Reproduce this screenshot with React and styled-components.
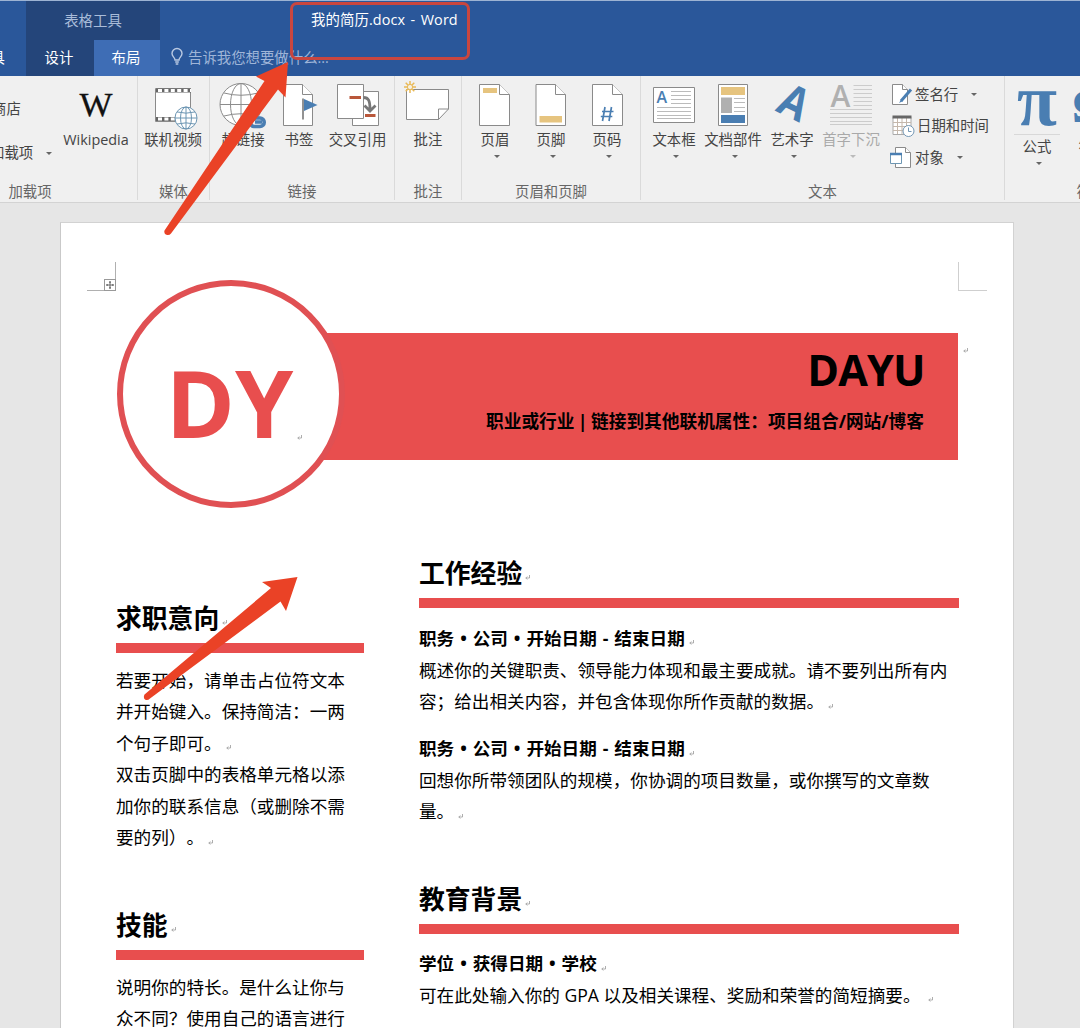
import React from 'react';
import styled, { createGlobalStyle, css } from 'styled-components';

const BLUE = '#2a579a';
const RED = '#e84e4e';
const ICON_BLUE = '#4a7eb2';
const LINE = '#8a8a8a';
const SANS = `'Open Sans', 'Noto Sans CJK SC', sans-serif`;

const GlobalStyle = createGlobalStyle`
  * { box-sizing: border-box; }
  body { margin: 0; background: #e6e6e6; font-family: ${SANS}; text-spacing-trim: space-all; }
  svg { display: block; overflow: visible; }
`;

const Window = styled.div`
  position: relative;
  width: 1080px;
  height: 1028px;
  overflow: hidden;
  background: #e6e6e6;
  display: flex;
  flex-direction: column;
`;

/* ---------- title bar ---------- */
const TitleBar = styled.header`
  flex: none;
  height: 76px;
  background: ${BLUE};
  border-top: 1px solid #9db3d3;
  display: flex;
  color: #fff;
  font-size: 14.4px;
  white-space: nowrap;
`;
const CutTab = styled.div`
  width: 26px;
  padding-top: 39px;
  line-height: 35px;
  display: flex;
  justify-content: flex-end;
  padding-right: 21px;
`;
const ContextTabs = styled.div`
  width: 134px;
  background: #24457a;
`;
const ContextTitle = styled.div`
  height: 39px;
  line-height: 39px;
  text-align: center;
  color: #a9bcd9;
`;
const TabRow = styled.div`
  display: flex;
  height: 36px;
`;
const Tab = styled.div`
  width: ${(p) => p.$w}px;
  line-height: 35px;
  padding-right: 2px;
  text-align: center;
  background: ${(p) => (p.$active ? '#3e6db5' : 'transparent')};
`;
const TitleArea = styled.div`
  flex: 1;
  display: flex;
  flex-direction: column;
`;
const DocTitle = styled.div`
  height: 39px;
  line-height: 38px;
  padding-left: 151px;
  letter-spacing: 0.1px;
  word-spacing: 1.6px;
`;
const TellMe = styled.div`
  height: 32px;
  padding-left: 11px;
  display: flex;
  align-items: center;
  gap: 5px;
  color: #9fb5d8;
`;

/* ---------- ribbon ---------- */
const Ribbon = styled.section`
  flex: none;
  height: 127px;
  background: #f0f0f0;
  border-bottom: 1px solid #d3d3d3;
  display: flex;
  color: #444;
  font-size: 14.4px;
  white-space: nowrap;
`;
const Group = styled.div`
  flex: none;
  width: ${(p) => p.$w}px;
  height: 124px;
  border-right: 1px solid #dadada;
  display: flex;
  flex-direction: column;
`;
const GroupBody = styled.div`
  flex: 1;
  display: flex;
  padding: 6px 0 0 ${(p) => p.$pad || 0}px;
  gap: ${(p) => p.$gap || 0}px;
`;
const GroupLabel = styled.div`
  height: 20px;
  line-height: 20px;
  margin-bottom: -2px;
  text-align: center;
  color: #666;
  padding-right: ${(p) => p.$shift || 0}px;
`;
const Item = styled.div`
  flex: none;
  width: ${(p) => p.$w}px;
  margin-left: ${(p) => p.$ml || 0}px;
  display: flex;
  flex-direction: column;
  align-items: center;
  color: ${(p) => (p.$disabled ? '#a9a9a9' : '#444')};
`;
const ItemLabel = styled.span`
  line-height: 20px;
  margin-top: 2px;
`;
const Caret = styled.i`
  width: 0;
  height: 0;
  border: 3px solid transparent;
  border-top-color: ${(p) => (p.$disabled ? '#bbb' : '#666')};
  border-bottom: 0;
  ${(p) => p.$below && css`margin: 5px 0 0 4px;`}
`;
const SplitLine = styled.hr`
  width: 46px;
  margin: 6px 0 0;
  border: 0;
  border-top: 1px solid ${(p) => (p.$hidden ? 'transparent' : '#d8d8d8')};
`;
const StoreColumn = styled.div`
  width: 60px;
  padding-top: 17px;
  display: flex;
  flex-direction: column;
  gap: 24px;
  line-height: 20px;
`;
const StoreRow = styled.div`
  display: flex;
  align-items: center;
  gap: 13px;
  margin-left: ${(p) => p.$cut}px;
`;
const CommandColumn = styled.div`
  display: flex;
  flex-direction: column;
  margin-left: 1px;
  padding-top: 1px;
`;
const Command = styled.div`
  height: 31.5px;
  padding-bottom: 8px;
  display: flex;
  align-items: center;
`;
const CommandText = styled.span`
  line-height: 20px;
  margin: 0 13px 0 ${(p) => p.$ml}px;
`;

/* Icons are drawn in window coordinates: x/y is the icon's corner. */
const Icon = ({ x, y = 82, w, h = 46, children }) => (
  <svg width={w} height={h} viewBox={`${x} ${y} ${w} ${h}`} fill="none" style={{ flex: 'none' }}>
    {children}
  </svg>
);

const PageShape = ({ x, y = 84.5, w = 30, h = 41, fold = 10 }) => (
  <g stroke={LINE} strokeWidth="1" fill="#fff">
    <path d={`M${x} ${y}h${w - fold}l${fold} ${fold}v${h - fold}h${-w}z`} />
    <path d={`M${x + w - fold} ${y}v${fold}h${fold}`} />
  </g>
);

const Globe = ({ cx, cy, r, color, sw = 1 }) => (
  <g stroke={color} strokeWidth={sw} fill="#fff">
    <circle cx={cx} cy={cy} r={r} />
    <ellipse cx={cx} cy={cy} rx={r * 0.5} ry={r} fill="none" />
    <path
      fill="none"
      d={`M${cx} ${cy - r}v${2 * r}M${cx - r} ${cy}h${2 * r}
      M${cx - r * 0.82} ${cy - r * 0.55}q${r * 0.82} ${r * 0.22} ${r * 1.64} 0
      M${cx - r * 0.82} ${cy + r * 0.55}q${r * 0.82} ${-r * 0.22} ${r * 1.64} 0`}
    />
  </g>
);

const rows = (x1, x2, ys) => ys.map((y) => `M${x1} ${y}H${x2}`).join('');

const BulbIcon = () => (
  <svg width="12" height="17" viewBox="0 0 12 17" fill="none" stroke="#b9c9e2" strokeWidth="1.4">
    <path d="M4 12C4 9.5 1 8.600 1 5.500a5 5 0 0 1 10 0C11 8.600 8 9.500 8 12zM4.200 14h3.600M4.700 16h2.600" />
  </svg>
);

const WikipediaIcon = () => (
  <Icon x={66} w={60}>
    <text x="79.500" y="115.500" fontFamily="Liberation Serif, serif" fontSize="34" fill="#111" stroke="#111" strokeWidth=".3" textLength="33" lengthAdjust="spacingAndGlyphs">W</text>
  </Icon>
);
const VideoIcon = () => (
  <Icon x={143} w={60}>
    <path d="M155.500 88.500h35v33h-35z" fill="#fff" stroke={LINE} />
    <path d="M156 90.500h35M156 119h35" stroke="#666" strokeWidth="4" />
    <path d="M158 90.500h33M158 119h33" stroke="#fff" strokeWidth="3" strokeDasharray="4 2.400" />
    <Globe cx={186} cy={118} r={11} color="#6d96b3" />
  </Icon>
);
const LinkIcon = () => (
  <Icon x={219} w={48}>
    <Globe cx={241} cy={104.5} r={21} color="#8c8c8c" />
    <path d="M252 118h8a4 4 0 0 1 0 8.500h-6a4 4 0 0 1-3.500-3M262 122h-7" stroke={ICON_BLUE} strokeWidth="3.600" />
  </Icon>
);
const BookmarkIcon = () => (
  <Icon x={283} w={32}>
    <PageShape x={283.5} w={29} />
    <path d="M303 98.500v21" stroke="#777" strokeWidth="1.600" />
    <path d="M304 99l13.500 6-13.500 6z" fill={ICON_BLUE} />
  </Icon>
);
const CrossRefIcon = () => (
  <Icon x={328} w={60}>
    <path d="M352.500 91.500h26v34h-26z" fill="#fff" stroke={LINE} />
    <path d="M337.500 84.500h26v34h-26z" fill="#fff" stroke={LINE} />
    <path d="M349.500 97.500h11.500M365 115.500h10.500" stroke="#b9573a" strokeWidth="3" />
    <path d="M363.500 97.500c5 0 6.500 3 6.500 12M364.500 105.500l5.500 5.500 5.500-5.500" stroke="#777" strokeWidth="2.800" />
  </Icon>
);
const CommentIcon = () => (
  <Icon x={403} w={50}>
    <path d="M406.500 89.500h42v19.500l-10 10.500h-32z" fill="#fff" stroke={LINE} />
    <path d="M448.500 109h-10v10.500" stroke={LINE} />
    <path d="M410 81v12M404 87h12M405.700 82.700l8.600 8.600M414.300 82.700l-8.600 8.600" stroke="#e9b956" strokeWidth="1.500" />
    <circle cx="410" cy="87" r="2.600" fill="#f6f1e4" stroke="#e9b956" />
  </Icon>
);
const HeaderIcon = () => (
  <Icon x={478} w={34}>
    <PageShape x={479.5} />
    <path d="M483 88h14v5h-14z" fill="#e6c47f" />
  </Icon>
);
const FooterIcon = () => (
  <Icon x={534} w={34}>
    <PageShape x={536} w={29.5} />
    <path d="M539.500 116h22.500v6.500h-22.500z" fill="#e6c47f" />
  </Icon>
);
const PageNumberIcon = () => (
  <Icon x={590} w={34}>
    <PageShape x={592.5} />
    <path d="M605 107l-2.500 14M611.500 107l-2.500 14M602 111.500h11.500M600.800 116.500h11.500" stroke={ICON_BLUE} strokeWidth="1.700" />
  </Icon>
);
const TextBoxIcon = () => (
  <Icon x={652} w={44}>
    <path d="M653.500 87.500h41v35h-41z" fill="#fff" stroke={LINE} />
    <path d={rows(671, 691, [91.5, 95.5, 99.5, 103.5]) + rows(657, 691, [107.5, 111.5, 115.5, 118.5])} stroke="#bbb" />
    <text x="656.500" y="103" fontSize="16" fontWeight="600" fill={ICON_BLUE}>A</text>
  </Icon>
);
const PartsIcon = () => (
  <Icon x={704} w={58}>
    <path d="M718.500 84.500h29v41h-29z" fill="#fff" stroke={LINE} />
    <path d="M721 87h24v8h-24z" fill="#e6c47f" />
    <path d="M721 97.500h11v15.500h-11z" fill="#b0b0b0" />
    <path d={rows(734, 745, [98.5, 102.5, 107.5, 111.5])} stroke="#bbb" />
    <path d="M721 115h24v8h-24z" fill={ICON_BLUE} />
  </Icon>
);
const WordArtIcon = () => (
  <Icon x={770} w={44}>
    <text transform="matrix(.86 .42 -.5 .96 774.5 110.500)" fontSize="42" fontWeight="700" fill={ICON_BLUE}>A</text>
  </Icon>
);
const DropCapIcon = () => (
  <Icon x={822} w={58}>
    <text x="830.500" y="107" fontSize="30" fontWeight="600" fill="#b0b0b0">A</text>
    <path d={rows(853.5, 872, [85.5, 89.5, 93.5, 97.5, 101.5, 105.5]) + rows(830, 872, [109.5, 113.5, 117.5, 121.5, 124.5])} stroke="#ccc" />
  </Icon>
);
const SignIcon = () => (
  <Icon x={889} y={84} w={26} h={22}>
    <PageShape x={892.5} y={84.5} w={15} h={20} fold={5} />
    <path d="M911 89.500L901 101" stroke={ICON_BLUE} strokeWidth="3" />
    <path d="M901.500 99l-2.500 4 4-2z" fill={ICON_BLUE} />
  </Icon>
);
const DateIcon = () => (
  <Icon x={889} y={116} w={26} h={22}>
    <path d="M893 118.500h18v17h-18z" fill="#fff" stroke="#aaa" />
    <path d="M897.500 119v16M902 119v16M906.500 119v16M893 123.500h18M893 127.500h18M893 131.500h18" stroke="#c5b8ac" />
    <path d="M892.500 118h19" stroke="#666" strokeWidth="3" />
    <circle cx="908.500" cy="132" r="5.500" fill="#fff" stroke="#7397b5" />
    <path d="M908.500 128.500v4h3" stroke="#7397b5" />
  </Icon>
);
const ObjectIcon = () => (
  <Icon x={889} y={147} w={26} h={22}>
    <PageShape x={895.5} y={147.5} w={15} h={20} fold={5} />
    <path d="M890.500 153.500h11v10h-11z" fill="#fff" stroke="#6d96b3" />
    <path d="M890 154h12" stroke={ICON_BLUE} strokeWidth="2.500" />
  </Icon>
);
const PiIcon = () => (
  <Icon x={1013} w={48}>
    <text x="1017" y="124.500" fontFamily="Liberation Serif, serif" fontSize="74" fontWeight="700" fill={ICON_BLUE} textLength="40" lengthAdjust="spacingAndGlyphs">π</text>
  </Icon>
);
const OmegaIcon = () => (
  <Icon x={1073} w={40}>
    <text x="1072" y="122" fontFamily="Liberation Serif, serif" fontSize="48" fontWeight="700" fill={ICON_BLUE}>Ω</text>
  </Icon>
);

const Tool = ({ w, ml, icon, label, menu, disabled }) => (
  <Item $w={w} $ml={ml} $disabled={disabled}>
    {icon}
    <ItemLabel>{label}</ItemLabel>
    {menu && <Caret $below $disabled={disabled} />}
  </Item>
);

/* ---------- document ---------- */
const Sheet = styled.main`
  flex: none;
  width: 954px;
  height: 830px;
  margin: 19px 0 0 60px;
  padding-top: 39px;
  background: #fff;
  border: 1px solid #d2d2d2;
  border-left-color: #c9c9c9;
  color: #000;
  white-space: nowrap;
`;
const CropMarks = styled.div`
  display: flex;
  justify-content: space-between;
  height: 29px;
  padding: 0 26px;
`;
const CropCorner = styled.div`
  width: 29px;
  border: 0 solid ${(p) => (p.$left ? '#b0b0b0' : '#cfcfcf')};
  border-bottom-width: 1px;
  ${(p) => (p.$left ? 'border-right-width: 1px;' : 'border-left-width: 1px;')}
  display: flex;
  align-items: flex-end;
  justify-content: flex-end;
`;
const MoveHandle = styled.div`
  width: 12px;
  height: 12px;
  margin: 0 -1px -1px 0;
  background: #fff;
  border: 1px solid #999;
`;
const Masthead = styled.div`
  display: flex;
  align-items: flex-start;
  height: 228px;
  margin-top: -11px;
  padding-left: 56px;
`;
const Monogram = styled.div`
  z-index: 1;
  flex: none;
  width: 228px;
  height: 228px;
  border: 6.500px solid #e05053;
  border-radius: 50%;
  background: #fff;
  display: flex;
  align-items: center;
  justify-content: center;
  padding: 16px 0 0 6px;
`;
const Initials = styled.span`
  color: ${RED};
  font-size: 93.5px;
  font-weight: 700;
  line-height: 100px;
`;
const Banner = styled.div`
  width: 728px;
  height: 126.500px;
  margin: 53px 0 0 -115px;
  padding: 9px 34px 0 0;
  background: ${RED};
  text-align: right;
  font-weight: 700;
`;
const Name = styled.div`
  font-size: 43px;
  letter-spacing: -0.8px;
  line-height: 56px;
  margin-right: -0.8px;
`;
const Role = styled.div`
  font-size: 17.7px;
  word-spacing: -1.2px;
  line-height: 24px;
  margin-top: 11px;
`;
const Columns = styled.div`
  display: flex;
  gap: 55px;
  padding-left: 55px;
`;
const Column = styled.div`
  width: ${(p) => p.$w}px;
  padding-top: ${(p) => p.$top}px;
`;
const Section = styled.section`
  margin-bottom: 51px;
`;
const Heading = styled.h2`
  margin: 0 0 5px;
  height: 40px;
  line-height: 40px;
  font-size: 25.8px;
  font-weight: 700;
  display: flex;
`;
const Rule = styled.div`
  height: 9.500px;
  background: ${RED};
  margin-bottom: ${(p) => p.$after}px;
`;
const Line = styled.div`
  height: 31.600px;
  line-height: 31.600px;
  font-size: 17.63px;
  font-weight: ${(p) => (p.$bold ? 700 : 400)};
  word-spacing: ${(p) => (p.$bold ? 1.35 : 0)}px;
  margin-top: ${(p) => p.$before || 0}px;
  display: flex;
`;
const MarkBox = styled.span`
  margin-left: ${(p) => p.$ml}px;
  align-self: ${(p) => p.$align || 'center'};
  padding-top: ${(p) => p.$drop}px;
`;
const ParagraphMark = ({ ml = 4, drop = 8, align }) => (
  <MarkBox $ml={ml} $drop={drop} $align={align}>
    <svg width="5" height="5" viewBox="0 0 5 5" fill="none" stroke="#999" strokeWidth=".8">
      <path d="M4.500 0v3H.8M2.300 1.500L.8 3l1.500 1.500" />
    </svg>
  </MarkBox>
);

/* ---------- annotations over the window ---------- */
const Highlight = styled.div`
  position: absolute;
  left: 290px;
  top: 2px;
  width: 180px;
  height: 58px;
  border: 3.500px solid #c9463f;
  border-radius: 7px;
`;
const Arrows = styled.svg`
  position: absolute;
  left: 0;
  top: 0;
`;

export default function App() {
  return (
    <Window>
      <GlobalStyle />
      <TitleBar>
        <CutTab>工具</CutTab>
        <ContextTabs>
          <ContextTitle>表格工具</ContextTitle>
          <TabRow>
            <Tab $w={68}>设计</Tab>
            <Tab $w={66} $active>布局</Tab>
          </TabRow>
        </ContextTabs>
        <TitleArea>
          <DocTitle>我的简历.docx - Word</DocTitle>
          <TellMe>
            <BulbIcon />
            <span>告诉我您想要做什么...</span>
          </TellMe>
        </TitleArea>
      </TitleBar>

      <Ribbon>
        <Group $w={138}>
          <GroupBody>
            <StoreColumn>
              <StoreRow $cut={-8}>商店</StoreRow>
              <StoreRow $cut={-10}>加载项<Caret /></StoreRow>
            </StoreColumn>
            <Tool w={72} icon={<WikipediaIcon />} label="Wikipedia" />
          </GroupBody>
          <GroupLabel $shift={77}>加载项</GroupLabel>
        </Group>
        <Group $w={72}>
          <GroupBody $pad={5}>
            <Tool w={60} icon={<VideoIcon />} label="联机视频" />
          </GroupBody>
          <GroupLabel>媒体</GroupLabel>
        </Group>
        <Group $w={185}>
          <GroupBody $pad={9} $gap={12.5}>
            <Tool w={48} icon={<LinkIcon />} label="超链接" />
            <Tool w={32} ml={3.5} icon={<BookmarkIcon />} label="书签" />
            <Tool w={60} icon={<CrossRefIcon />} label="交叉引用" />
          </GroupBody>
          <GroupLabel>链接</GroupLabel>
        </Group>
        <Group $w={67}>
          <GroupBody $pad={8}>
            <Tool w={50} icon={<CommentIcon />} label="批注" />
          </GroupBody>
          <GroupLabel>批注</GroupLabel>
        </Group>
        <Group $w={179}>
          <GroupBody $pad={16} $gap={22}>
            <Tool w={34} icon={<HeaderIcon />} label="页眉" menu />
            <Tool w={34} icon={<FooterIcon />} label="页脚" menu />
            <Tool w={34} icon={<PageNumberIcon />} label="页码" menu />
          </GroupBody>
          <GroupLabel>页眉和页脚</GroupLabel>
        </Group>
        <Group $w={364}>
          <GroupBody $pad={11} $gap={8}>
            <Tool w={44} icon={<TextBoxIcon />} label="文本框" menu />
            <Tool w={58} icon={<PartsIcon />} label="文档部件" menu />
            <Tool w={44} icon={<WordArtIcon />} label="艺术字" menu />
            <Tool w={58} icon={<DropCapIcon />} label="首字下沉" menu disabled />
            <CommandColumn>
              <Command>
                <SignIcon />
                <CommandText $ml={0}>签名行</CommandText>
                <Caret />
              </Command>
              <Command>
                <DateIcon />
                <CommandText $ml={2}>日期和时间</CommandText>
              </Command>
              <Command>
                <ObjectIcon />
                <CommandText $ml={0}>对象</CommandText>
                <Caret />
              </Command>
            </CommandColumn>
          </GroupBody>
          <GroupLabel>文本</GroupLabel>
        </Group>
        <Group $w={173}>
          <GroupBody $pad={8} $gap={12}>
            <Item $w={48}>
              <PiIcon />
              <SplitLine />
              <ItemLabel>公式</ItemLabel>
              <Caret $below />
            </Item>
            <Item $w={40}>
              <OmegaIcon />
              <SplitLine $hidden />
              <ItemLabel>符号</ItemLabel>
            </Item>
          </GroupBody>
          <GroupLabel>符号</GroupLabel>
        </Group>
      </Ribbon>

      <Sheet>
        <CropMarks>
          <CropCorner $left>
            <MoveHandle>
              <svg width="10" height="10" viewBox="0 0 10 10" stroke="#666" fill="none">
                <path d="M5 1v8M1 5h8M4 2.200h2M4 7.800h2M2.200 4v2M7.800 4v2" />
              </svg>
            </MoveHandle>
          </CropCorner>
          <CropCorner />
        </CropMarks>
        <Masthead>
          <Monogram>
            <Initials>DY</Initials>
            <ParagraphMark ml={4} drop={70} />
          </Monogram>
          <Banner>
            <Name>DAYU</Name>
            <Role>职业或行业 | 链接到其他联机属性：项目组合/网站/博客</Role>
          </Banner>
          <ParagraphMark ml={5} drop={68} align="flex-start" />
        </Masthead>
        <Columns>
          <Column $w={248} $top={90}>
            <Section>
              <Heading>求职意向<ParagraphMark ml={3} /></Heading>
              <Rule $after={12} />
              <Line>若要开始，请单击占位符文本</Line>
              <Line>并开始键入。保持简洁：一两</Line>
              <Line>个句子即可。<ParagraphMark /></Line>
              <Line>双击页脚中的表格单元格以添</Line>
              <Line>加你的联系信息（或删除不需</Line>
              <Line>要的列）。<ParagraphMark /></Line>
            </Section>
            <Section>
              <Heading>技能<ParagraphMark ml={3} /></Heading>
              <Rule $after={12} />
              <Line>说明你的特长。是什么让你与</Line>
              <Line>众不同？使用自己的语言进行</Line>
            </Section>
          </Column>
          <Column $w={540} $top={45}>
            <Section>
              <Heading>工作经验<ParagraphMark ml={3} /></Heading>
              <Rule $after={15.7} />
              <Line $bold>职务 • 公司 • 开始日期 - 结束日期<ParagraphMark /></Line>
              <Line>概述你的关键职责、领导能力体现和最主要成就。请不要列出所有内</Line>
              <Line>容；给出相关内容，并包含体现你所作贡献的数据。<ParagraphMark /></Line>
              <Line $bold $before={15.3}>职务 • 公司 • 开始日期 - 结束日期<ParagraphMark /></Line>
              <Line>回想你所带领团队的规模，你协调的项目数量，或你撰写的文章数</Line>
              <Line>量。<ParagraphMark /></Line>
            </Section>
            <Section>
              <Heading>教育背景<ParagraphMark ml={3} /></Heading>
              <Rule $after={14.7} />
              <Line $bold>学位 • 获得日期 • 学校<ParagraphMark /></Line>
              <Line>可在此处输入你的 GPA 以及相关课程、奖励和荣誉的简短摘要。<ParagraphMark ml={7} /></Line>
            </Section>
          </Column>
        </Columns>
      </Sheet>

      <Highlight />
      <Arrows width="1080" height="1028" viewBox="0 0 1080 1028" fill="#ea4226">
        <path d="M288 62L256 76.500L264.500 81L164.500 230.500Q163.500 234 167 235Q169.500 235.500 171 233.500L278 89.500L285.500 97.500Z" />
        <path d="M297.500 577L262 582L271 588L144.500 694.500Q143 697.500 145 699.500Q147.500 701 150 698.500L280.500 601.500L286 611Z" />
      </Arrows>
    </Window>
  );
}
